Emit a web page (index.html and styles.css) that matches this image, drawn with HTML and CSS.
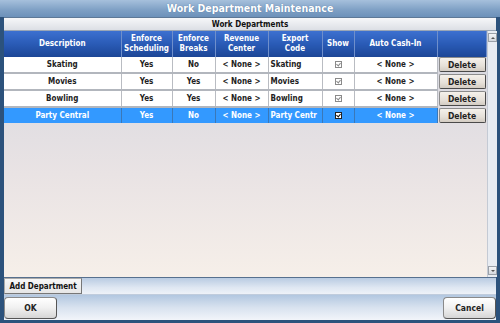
FILE: index.html
```html
<!DOCTYPE html>
<html lang="en">
<head>
  <meta charset="UTF-8">
  <title>Work Department Maintenance</title>
  <link rel="stylesheet" href="styles.css">
</head>
<body>

<div class="window">
  <div class="titlebar">Work Department Maintenance</div>

  <div class="panel">
    <div class="subheader">Work Departments</div>
    <div class="grid-wrap">
      <table class="grid">
        <colgroup>
          <col style="width:117px">
          <col style="width:51px">
          <col style="width:43px">
          <col style="width:53px">
          <col style="width:54px">
          <col style="width:32px">
          <col style="width:83px">
          <col style="width:49px">
        </colgroup>
        <thead>
          <tr>
            <th>Description</th>
            <th>Enforce<br>Scheduling</th>
            <th>Enforce<br>Breaks</th>
            <th>Revenue<br>Center</th>
            <th>Export<br>Code</th>
            <th>Show</th>
            <th>Auto Cash-In</th>
            <th></th>
          </tr>
        </thead>
        <tbody>
          <tr>
            <td>Skating</td><td>Yes</td><td>No</td><td>&lt; None &gt;</td>
            <td class="left">Skating</td><td><span class="check"></span></td>
            <td>&lt; None &gt;</td><td class="btn-cell"><button class="btn-delete">Delete</button></td>
          </tr>
          <tr>
            <td>Movies</td><td>Yes</td><td>Yes</td><td>&lt; None &gt;</td>
            <td class="left">Movies</td><td><span class="check"></span></td>
            <td>&lt; None &gt;</td><td class="btn-cell"><button class="btn-delete">Delete</button></td>
          </tr>
          <tr>
            <td>Bowling</td><td>Yes</td><td>Yes</td><td>&lt; None &gt;</td>
            <td class="left">Bowling</td><td><span class="check"></span></td>
            <td>&lt; None &gt;</td><td class="btn-cell"><button class="btn-delete">Delete</button></td>
          </tr>
          <tr class="selected">
            <td>Party Central</td><td>Yes</td><td>No</td><td>&lt; None &gt;</td>
            <td class="left">Party Centr</td><td><span class="check on"></span></td>
            <td>&lt; None &gt;</td><td class="btn-cell"><button class="btn-delete">Delete</button></td>
          </tr>
        </tbody>
      </table>
      <div class="scrollbar">
        <span class="arrow up"></span>
        <span class="arrow down"></span>
      </div>
    </div>
  </div>

  <div class="add-bar">
    <button class="btn-add">Add Department</button>
  </div>

  <div class="footer">
    <button class="btn-big">OK</button>
    <button class="btn-big">Cancel</button>
  </div>
</div>

</body>
</html>
```

FILE: styles.css
```css
* { box-sizing: border-box; }

body {
  margin: 0;
  font-family: "DejaVu Sans", Verdana, sans-serif;
  font-stretch: condensed;
  background: #2c527c;
}

.window {
  width: 500px;
  height: 323px;
  background: #2c527c;
  padding: 0 4px 3px 4px;
  display: flex;
  flex-direction: column;
  position: relative;
}

.window::before {
  content: "";
  position: absolute;
  left: 0; right: 0; top: 0;
  height: 17px;
  background: linear-gradient(#a6c0dc, #7d9fc4 60%, #6c91ba);
}

.titlebar {
  position: relative;
  height: 17px;
  line-height: 17px;
  text-align: center;
  color: #fff;
  font-weight: bold;
  font-size: 10.5px;
  text-shadow: 0 0 1px #4a6f98;
}

.panel {
  height: 260px;
  flex-shrink: 0;
  display: flex;
  flex-direction: column;
  background: linear-gradient(#d2d5df, #e9e3e4 60%, #f6efe9);
  border-top: 1px solid #5d7896;
}

.subheader {
  height: 13px;
  line-height: 13px;
  text-align: center;
  font-size: 8px;
  font-weight: bold;
  color: #111;
  background: linear-gradient(#f6f7f9, #dcdfe5);
  border-bottom: 1px solid #9aa6b6;
}

.grid-wrap {
  flex: 1;
  display: flex;
  min-height: 0;
}

.grid {
  width: 482px;
  border-collapse: collapse;
  table-layout: fixed;
  font-size: 8px;
  align-self: flex-start;
}

.grid th {
  height: 26px;
  padding: 0;
  color: #fff;
  font-weight: bold;
  line-height: 10px;
  background: linear-gradient(#3c70d0, #2a5bb6 50%, #1c4696);
  border-right: 1px solid #6f8fcb;
}

.grid td {
  height: 16px;
  padding: 0 2px;
  line-height: 12px;
  text-align: center;
  font-weight: bold;
  color: #222;
  background: #fff;
  border-right: 1px solid #b9bcc2;
  border-bottom: 2px solid #b2b6bd;
  white-space: nowrap;
  overflow: hidden;
}

.grid td.left { text-align: left; }

.grid td.btn-cell {
  padding: 0 0 0 1px;
  background: transparent;
  border-bottom-color: transparent;
  border-right: none;
}

.grid tr.selected td {
  background: #3399ff;
  color: #fff;
  border-bottom: none;
  border-right-color: #3a78b8;
}

.grid tr.selected td.btn-cell { background: transparent; }

.check {
  display: inline-block;
  width: 7px;
  height: 7px;
  border: 1px solid #8a8a8a;
  background: #fff;
  position: relative;
  vertical-align: middle;
}

.check::after {
  content: "";
  position: absolute;
  left: 1px;
  top: 0;
  width: 2px;
  height: 3px;
  border-right: 1px solid #888;
  border-bottom: 1px solid #888;
  transform: rotate(40deg);
}

.check.on { border-color: #222; }
.check.on::after { border-color: #111; }

.btn-delete {
  width: 47px;
  height: 15px;
  padding: 0;
  font-family: inherit;
  font-stretch: condensed;
  font-size: 8.5px;
  font-weight: bold;
  color: #222;
  background: linear-gradient(#f5f1eb, #e6e0d8 60%, #d3ccc3);
  border: 1px solid #8c8c8c;
  border-right-color: #4a4a4a;
  border-bottom-color: #4a4a4a;
  border-radius: 2px;
  display: block;
}

.scrollbar {
  width: 10px;
  margin-left: auto;
  background: #e8ecf2;
  border-left: 1px solid #c4cad4;
  display: flex;
  flex-direction: column;
  justify-content: space-between;
  padding: 2px 0;
}

.arrow {
  display: block;
  width: 9px;
  height: 9px;
  background: linear-gradient(#f4f5f7, #d4d8de);
  border: 1px solid #9aa0a8;
  position: relative;
}

.arrow::after {
  content: "";
  position: absolute;
  left: 2px;
  top: 3px;
  border-left: 2px solid transparent;
  border-right: 2px solid transparent;
}

.arrow.up::after { border-bottom: 2px solid #555; }
.arrow.down::after { border-top: 2px solid #555; }

.add-bar {
  height: 17px;
  flex-shrink: 0;
  display: flex;
  align-items: flex-end;
  background: linear-gradient(#b9cbe2, #dfe7f2 60%, #eef2f8);
  border-top: 1px solid #57708e;
}

.btn-add {
  display: block;
  height: 16px;
  width: 78px;
  padding: 0;
  white-space: nowrap;
  font-family: inherit;
  font-stretch: condensed;
  font-size: 8px;
  font-weight: bold;
  color: #111;
  background: linear-gradient(#f7f7f7, #e6e6e6);
  border: 1px solid #777;
  border-top-color: #aaa;
  border-left-color: #aaa;
}

.footer {
  flex: 1;
  display: flex;
  justify-content: space-between;
  align-items: center;
  padding: 0;
  background: linear-gradient(#b2c7e0, #d8e2ef 50%, #f2f5fa);
  border-top: 1px solid #c0ccdc;
}

.btn-big {
  width: 53px;
  height: 22px;
  padding: 0;
  font-family: inherit;
  font-stretch: condensed;
  font-size: 8.5px;
  font-weight: bold;
  color: #222;
  background: linear-gradient(#ffffff, #f0f0f0 50%, #d6d6d6);
  border: 1px solid #8a8a8a;
  border-right-color: #555;
  border-bottom-color: #555;
  border-radius: 4px;
}
```
